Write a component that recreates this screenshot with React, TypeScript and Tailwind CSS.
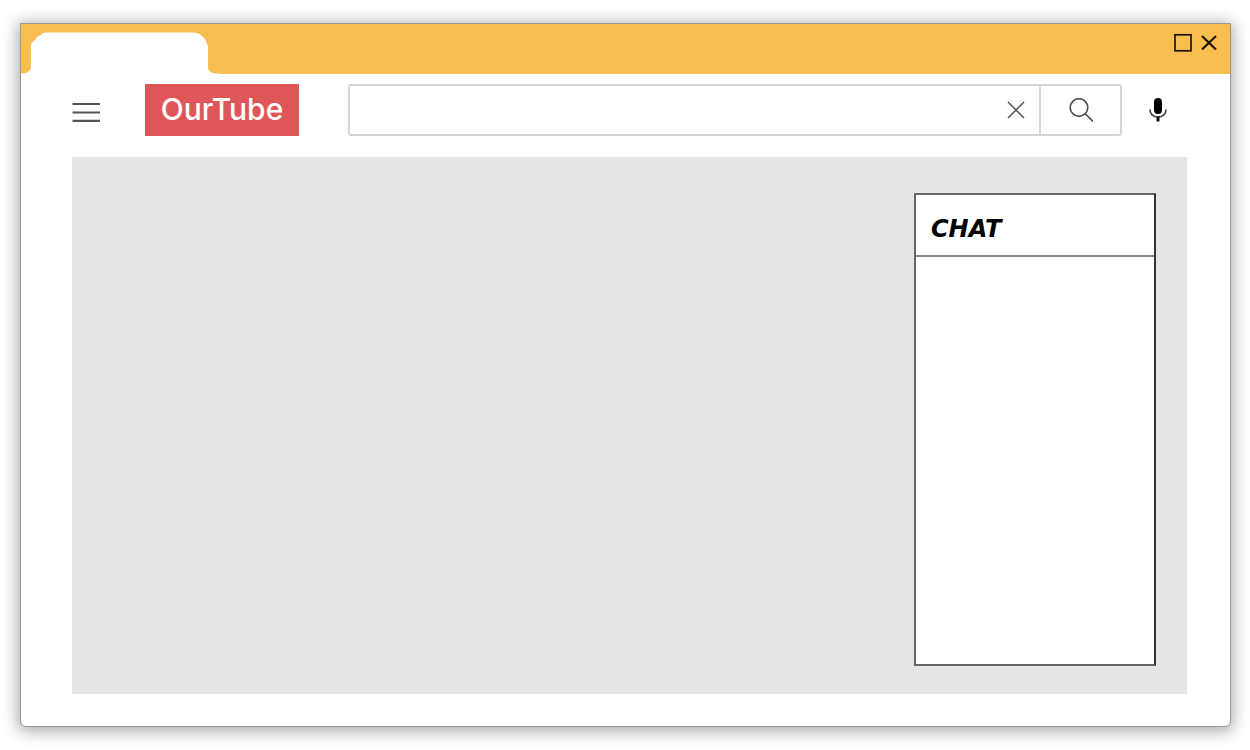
import React from "react";

function TitleBar() {
  return (
    <header className="flex h-[50px] shrink-0 items-end justify-between bg-[#f8be50]">
      <svg className="h-[42px] w-[199px]" viewBox="0 0 199 42" fill="#fff" aria-hidden="true">
        <path d="M0 42V41.500H2C7 41 10 38 10 35V13C10 11 12 9 14 8C15 6 17 3 20 3C21 1 23 0.500 26 0.500H171C179 0.500 184 5 186 12C187 13 187 14 187 15V36C187 39 191 41.500 195 41.500H199V42Z" />
      </svg>
      <div className="flex items-center gap-2 self-start pt-2 pr-[13px]">
        <button type="button" aria-label="Maximize" className="flex size-5 items-center justify-center">
          <svg className="size-5" viewBox="0 0 20 20" fill="none" stroke="#1c1808" strokeWidth="1.7" aria-hidden="true">
            <rect x="2" y="2.800" width="16" height="16" />
          </svg>
        </button>
        <button type="button" aria-label="Close window" className="flex size-4 items-center justify-center">
          <svg className="size-4" viewBox="0 0 16 16" fill="none" stroke="#1c1808" strokeWidth="2.200" aria-hidden="true">
            <path d="M1 2L15 15.500M15 2L1 15.500" />
          </svg>
        </button>
      </div>
    </header>
  );
}

function SearchForm() {
  return (
    <form
      role="search"
      onSubmit={(e) => e.preventDefault()}
      className="flex h-[52px] min-w-0 flex-1 rounded-[3px] border-2 border-[#d4d4d4]"
    >
      <input
        type="text"
        aria-label="Search"
        className="min-w-0 flex-1 bg-white px-3 font-['Inter',sans-serif] text-lg outline-none"
      />
      <button type="reset" aria-label="Clear search" className="flex w-12 items-center justify-center">
        <svg className="size-5" viewBox="0 0 20 20" fill="none" stroke="#505050" strokeWidth="1.5" aria-hidden="true">
          <path d="M3 2L19 18M19 2L3 18" />
        </svg>
      </button>
      <button
        type="submit"
        aria-label="Submit search"
        className="flex w-[81px] items-center justify-center border-l-2 border-[#d8d8d8]"
      >
        <svg className="size-6" viewBox="0 0 24 24" fill="none" stroke="#505050" strokeWidth="1.7" aria-hidden="true">
          <circle cx="10" cy="9.500" r="8.800" />
          <path d="M16 15.500L24 23.500" />
        </svg>
      </button>
    </form>
  );
}

function Toolbar() {
  return (
    <nav className="flex items-center pt-[10px] pr-[43px] pl-[51px]">
      <button type="button" aria-label="Menu" className="flex h-12 w-7 shrink-0 items-center">
        <svg className="h-6 w-7" viewBox="0 0 28 24" fill="none" stroke="#555" strokeWidth="2.200" aria-hidden="true">
          <path d="M0.500 6H28M0.500 14.500H28M0.500 22.900H28" />
        </svg>
      </button>
      <a
        href="#"
        className="ml-[45px] flex h-[52px] w-[154px] shrink-0 items-center justify-center bg-[#de5657] pb-[2px] font-['Inter',sans-serif] text-[30px] leading-none font-medium text-white"
      >
        OurTube
      </a>
      <div className="ml-[49px] flex min-w-0 flex-1 items-center">
        <SearchForm />
        <button type="button" aria-label="Voice search" className="mr-5 ml-[27px] flex h-12 w-[18px] shrink-0 items-center justify-center">
          <svg className="h-6 w-[18px]" viewBox="0 0 18 24" fill="none" aria-hidden="true">
            <rect x="5" y="0" width="8" height="16" rx="4" fill="#000" />
            <path d="M1 11.500C1 16.500 4.500 19 9 19C13.500 19 17 16.500 17 11.500" stroke="#444" strokeWidth="1.7" />
            <path d="M9 18.500V23.500" stroke="#111" strokeWidth="3" />
          </svg>
        </button>
      </div>
    </nav>
  );
}

function ChatPanel() {
  return (
    <aside className="flex w-[242px] flex-col border-2 border-[#666] border-r-[#333] bg-white">
      <h2 className="flex h-[62px] items-center border-b-2 border-[#888] px-[15px] pt-2 font-['DejaVu_Sans',sans-serif] text-2xl font-bold text-black italic">
        CHAT
      </h2>
      <div className="flex-1" />
    </aside>
  );
}

export default function App() {
  return (
    <div className="flex min-h-screen bg-white py-[23px] pr-[19px] pl-5">
      <div className="flex min-w-0 flex-1 flex-col overflow-hidden rounded-b-md border border-[#999] bg-white shadow-[0_2px_16px_2px_rgba(0,0,0,0.35)]">
        <TitleBar />
        <Toolbar />
        <main className="mt-[21px] mr-[43px] mb-8 ml-[51px] flex flex-1 justify-end bg-[#e5e5e5] pt-9 pr-[31px] pb-7">
          <ChatPanel />
        </main>
      </div>
    </div>
  );
}
